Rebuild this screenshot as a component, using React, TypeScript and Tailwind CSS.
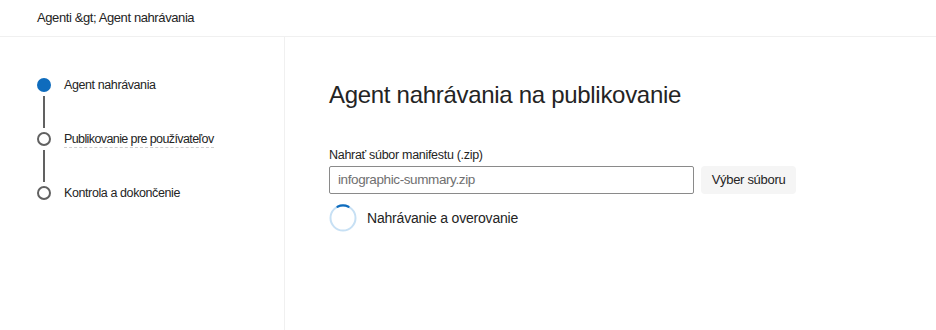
import React from "react";

const steps = [
  { label: "Agent nahrávania", active: true },
  { label: "Publikovanie pre používateľov", active: false },
  { label: "Kontrola a dokončenie", active: false },
];

export default function App() {
  return (
    <div
      className="w-[936px] h-[330px] bg-white text-[#242424] flex flex-col overflow-hidden"
      style={{ fontFamily: '"Segoe UI", "Liberation Sans", Arial, sans-serif' }}
    >
      {/* Breadcrumb header */}
      <div className="h-[37px] shrink-0 border-b border-[#f0f0f0] flex items-center pl-[37px] text-[13px] tracking-[-0.4px]">
        Agenti &amp;gt; Agent nahrávania
      </div>

      <div className="flex flex-1 min-h-0">
        {/* Stepper */}
        <div className="w-[285px] shrink-0 border-r border-[#f0f0f0] pt-[41px] pl-[37px]">
          {steps.map((s, i) => (
            <div key={s.label} className="flex">
              <div className="flex flex-col items-center w-[14px]">
                {s.active ? (
                  <div className="w-[14px] h-[14px] rounded-full bg-[#0f6cbd]" />
                ) : (
                  <div className="w-[14px] h-[14px] rounded-full border-2 border-[#616161]" />
                )}
                {i < steps.length - 1 && (
                  <div className="w-[2px] h-[32px] bg-[#616161] my-[4px]" />
                )}
              </div>
              <div className="ml-[13px] text-[12.5px] leading-[14px] tracking-[-0.4px]">
                <span className={i === 1 ? "border-b border-dashed border-[#cfcfcf] pb-[1px] tracking-[-0.6px]" : ""}>
                  {s.label}
                </span>
              </div>
            </div>
          ))}
        </div>

        {/* Main */}
        <div className="flex-1 pl-[44px] pt-[43px]">
          <h1 className="text-[24px] leading-[30px] text-[#242424] font-normal tracking-[-0.3px]">
            Agent nahrávania na publikovanie
          </h1>
          <div className="mt-[37px] text-[12.5px] leading-[16px] tracking-[-0.3px]">
            Nahrať súbor manifestu (.zip)
          </div>
          <div className="mt-[3px] flex items-center gap-[7px]">
            <div className="w-[365px] h-[28px] border border-[#8a8a8a] rounded-[2px] flex items-center px-[8px] text-[13.5px] tracking-[-0.4px] text-[#707070]">
              infographic-summary.zip
            </div>
            <button className="w-[95px] h-[28px] bg-[#f5f5f5] rounded-[4px] text-[13px] tracking-[-0.3px] text-[#242424]">
              Výber súboru
            </button>
          </div>
          <div className="mt-[10px] flex items-center gap-[10px]">
            <svg width="28" height="28" viewBox="0 0 28 28">
              <circle cx="14" cy="14" r="12.5" fill="none" stroke="#c7e0f4" strokeWidth="2" />
              <path
                d="M8.5 2.8 A12.5 12.5 0 0 1 19.5 2.8"
                fill="none"
                stroke="#0f6cbd"
                strokeWidth="2.2"
                strokeLinecap="round"
              />
            </svg>
            <span className="text-[14px] tracking-[-0.2px] text-[#242424]">Nahrávanie a overovanie</span>
          </div>
        </div>
      </div>
    </div>
  );
}
